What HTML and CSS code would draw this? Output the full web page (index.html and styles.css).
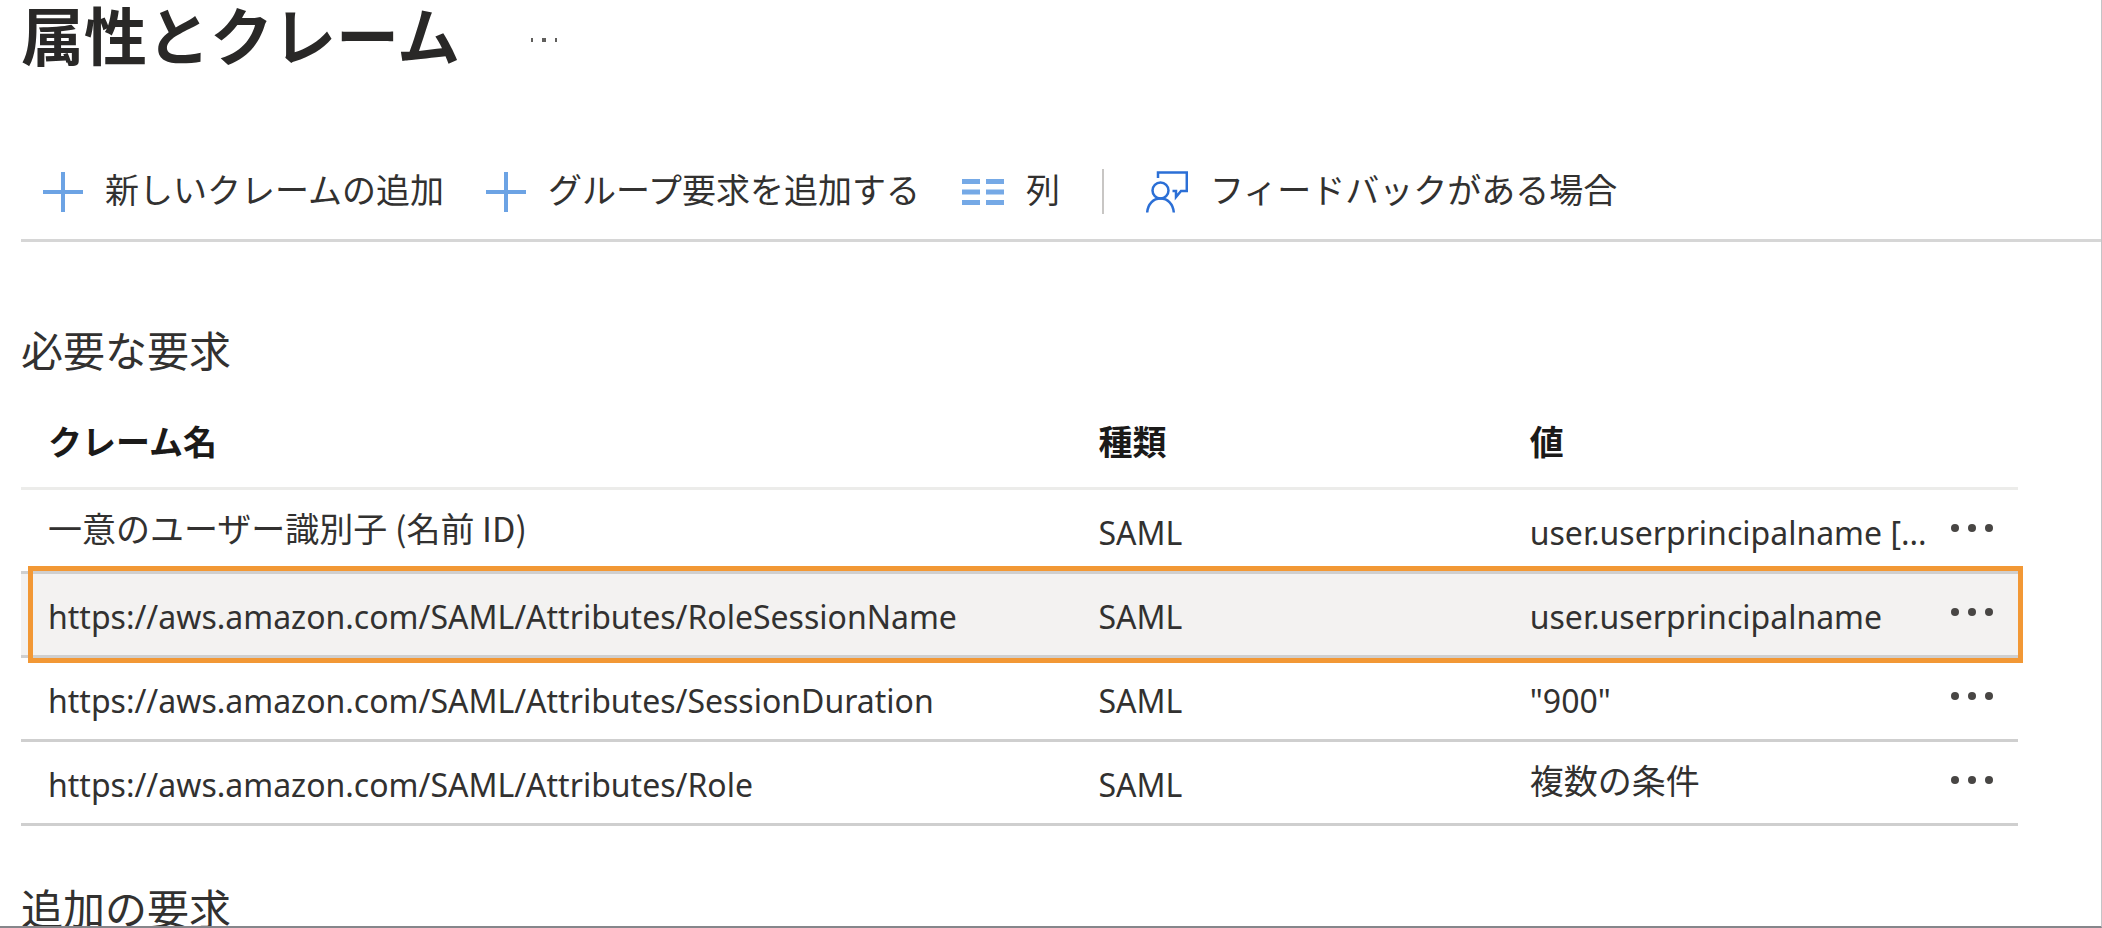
FILE: index.html
```html
<!DOCTYPE html>
<html lang="ja">
  <head>
    <meta charset="utf-8">
    <title>属性とクレーム</title>
    <link rel="stylesheet" href="styles.css">
  </head>
  <body>
    <div class="blade">
      <header class="blade-header">
        <h1>属性とクレーム</h1>
        <button class="more-small" aria-label="その他">
          <svg width="28" height="6" viewBox="0 0 28 6" fill="#605e5c"><rect x="1" y="1" width="2" height="4"/><rect x="12" y="1" width="4" height="4"/><rect x="25" y="1" width="2" height="4"/></svg>
        </button>
      </header>

      <div class="toolbar">
        <button class="command">
          <svg width="40" height="42" viewBox="0 0 40 42" stroke="#6ca3e4" stroke-width="4"><path d="M20 1v40M0 21h40"/></svg>
          <span>新しいクレームの追加</span>
        </button>
        <button class="command">
          <svg width="40" height="42" viewBox="0 0 40 42" stroke="#6ca3e4" stroke-width="4"><path d="M20 1v40M0 21h40"/></svg>
          <span>グループ要求を追加する</span>
        </button>
        <button class="command">
          <svg width="42" height="42" viewBox="0 0 42 42" stroke="#75a9e6" stroke-width="5"><path d="M0 10.500h18M24 10.500h18M0 21h18M24 21h18M0 31.500h18M24 31.500h18"/></svg>
          <span>列</span>
        </button>
        <span class="divider"></span>
        <button class="command">
          <svg width="42" height="42" viewBox="0 0 42 42" fill="none" stroke="#2b6fd6" stroke-width="2.500"><circle cx="14.500" cy="19.500" r="8"/><path d="M1.200 41.500c.6-8.500 6-14 13.300-14s12.700 5.500 13.300 14M12 7V1.500h28.800V20H35l-5 6v-6h-3.500"/></svg>
          <span>フィードバックがある場合</span>
        </button>
      </div>

      <section class="claims">
        <h2>必要な要求</h2>
        <table>
          <colgroup>
            <col class="col-name">
            <col class="col-type">
            <col class="col-value">
            <col class="col-menu">
          </colgroup>
          <thead>
            <tr><th>クレーム名</th><th>種類</th><th>値</th><th></th></tr>
          </thead>
          <tbody>
            <tr>
              <td>一意のユーザー識別子 (名前 ID)</td>
              <td class="latin">SAML</td>
              <td class="latin">user.userprincipalname [...</td>
              <td class="menu"><button aria-label="メニュー"><svg width="44" height="10" viewBox="0 0 44 10" fill="#484644"><circle cx="5" cy="5" r="4"/><circle cx="22" cy="5" r="4"/><circle cx="39" cy="5" r="4"/></svg></button></td>
            </tr>
            <tr class="selected">
              <td class="latin">https://aws.amazon.com/SAML/Attributes/RoleSessionName</td>
              <td class="latin">SAML</td>
              <td class="latin">user.userprincipalname</td>
              <td class="menu"><button aria-label="メニュー"><svg width="44" height="10" viewBox="0 0 44 10" fill="#484644"><circle cx="5" cy="5" r="4"/><circle cx="22" cy="5" r="4"/><circle cx="39" cy="5" r="4"/></svg></button></td>
            </tr>
            <tr>
              <td class="latin">https://aws.amazon.com/SAML/Attributes/SessionDuration</td>
              <td class="latin">SAML</td>
              <td class="latin">"900"</td>
              <td class="menu"><button aria-label="メニュー"><svg width="44" height="10" viewBox="0 0 44 10" fill="#484644"><circle cx="5" cy="5" r="4"/><circle cx="22" cy="5" r="4"/><circle cx="39" cy="5" r="4"/></svg></button></td>
            </tr>
            <tr>
              <td class="latin">https://aws.amazon.com/SAML/Attributes/Role</td>
              <td class="latin">SAML</td>
              <td>複数の条件</td>
              <td class="menu"><button aria-label="メニュー"><svg width="44" height="10" viewBox="0 0 44 10" fill="#484644"><circle cx="5" cy="5" r="4"/><circle cx="22" cy="5" r="4"/><circle cx="39" cy="5" r="4"/></svg></button></td>
            </tr>
          </tbody>
        </table>
      </section>

      <section class="claims">
        <h2>追加の要求</h2>
      </section>
    </div>
  </body>
</html>
```
FILE: styles.css
```css
* { box-sizing: border-box; }

body {
    margin: 0;
    background: #fff;
    color: #323130;
    font-family: "Noto Sans CJK JP", "Noto Sans", sans-serif;
    font-size: 34px;
}

button {
    background: none;
    border: none;
    padding: 0;
    color: inherit;
    font: inherit;
}

svg { display: block; flex: none; }

.blade {
    height: 100vh;
    overflow: hidden;
    padding-left: 21px;
    border-right: 1px solid #c4c4c6;
    border-bottom: 2px solid #86868b;
}

.blade-header {
    display: flex;
    align-items: center;
    gap: 70px;
    height: 80px;
}
.blade-header h1 {
    align-self: flex-start;
    margin: 0;
    font-size: 63px;
    font-weight: 700;
    line-height: 66px;
    color: #292827;
}

.toolbar {
    display: flex;
    align-items: center;
    gap: 42px;
    height: 98px;
    margin-top: 64px;
    margin-bottom: 26px;
    padding-left: 22px;
    border-bottom: 3px solid #d6d6d6;
}
.command {
    display: flex;
    align-items: center;
    gap: 22px;
    line-height: 48px;
    white-space: nowrap;
}
.command span { padding-bottom: 6px; }
.divider { width: 2px; height: 45px; background: #c8c6c4; }

.claims h2 {
    margin: 0;
    padding: 50px 0 4px;
    font-size: 42px;
    font-weight: 400;
    line-height: 62px;
}

table {
    width: calc(100% - 83px);
    table-layout: fixed;
    border-collapse: separate;
    border-spacing: 0;
}
.col-name { width: 52.6%; }
.col-type { width: 21.6%; }
.col-menu { width: 90px; }

th, td {
    height: 84px;
    padding: 0 0 6px 27px;
    border-bottom: 3px solid #cfcfcf;
    text-align: left;
    white-space: nowrap;
    line-height: 48px;
}
th {
    height: 106px;
    padding-top: 16px;
    border-bottom-color: #ececea;
    font-weight: 700;
    color: #1b1a19;
}
.latin {
    padding-top: 4px;
    padding-bottom: 0;
    font-family: "Noto Sans", "Noto Sans CJK JP", sans-serif;
    font-size: 32px;
}
.menu { padding-left: 22px; }
.menu button { display: block; }

/* picked row with the frame drawn over its borders */
.selected { position: relative; background: #f3f2f1; }
.selected .menu::after {
    content: "";
    position: absolute;
    top: -8px;
    right: -5px;
    bottom: -5px;
    left: 7px;
    border: 5px solid #f29835;
}
```
